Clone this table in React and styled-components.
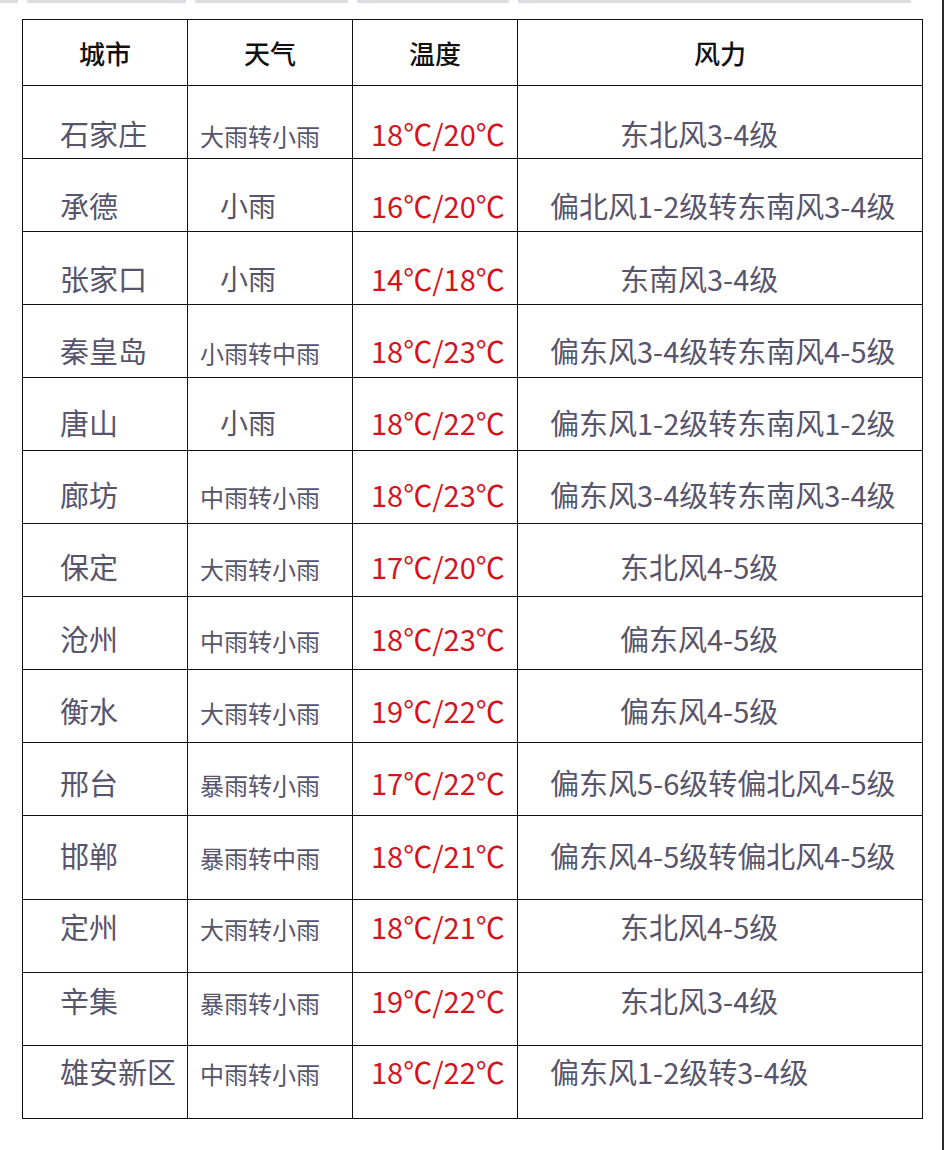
import React from "react";
import styled, { createGlobalStyle } from "styled-components";

const GlobalStyle = createGlobalStyle`
  html, body {
    margin: 0;
    padding: 0;
    background: #fff;
  }
  body {
    font-family: "Noto Sans CJK SC", "Noto Sans", sans-serif;
  }
`;

const rows = [
  { city: "石家庄", weather: "大雨转小雨", temp: "18℃/20℃", wind: "东北风3-4级", indent: true, pad: 33 },
  { city: "承德", weather: "小雨", temp: "16℃/20℃", wind: "偏北风1-2级转东南风3-4级", pad: 32 },
  { city: "张家口", weather: "小雨", temp: "14℃/18℃", wind: "东南风3-4级", indent: true, pad: 32 },
  { city: "秦皇岛", weather: "小雨转中雨", temp: "18℃/23℃", wind: "偏东风3-4级转东南风4-5级", pad: 31 },
  { city: "唐山", weather: "小雨", temp: "18℃/22℃", wind: "偏东风1-2级转东南风1-2级", pad: 30 },
  { city: "廊坊", weather: "中雨转小雨", temp: "18℃/23℃", wind: "偏东风3-4级转东南风3-4级", pad: 29 },
  { city: "保定", weather: "大雨转小雨", temp: "17℃/20℃", wind: "东北风4-5级", indent: true, pad: 28 },
  { city: "沧州", weather: "中雨转小雨", temp: "18℃/23℃", wind: "偏东风4-5级", indent: true, pad: 27 },
  { city: "衡水", weather: "大雨转小雨", temp: "19℃/22℃", wind: "偏东风4-5级", indent: true, pad: 26 },
  { city: "邢台", weather: "暴雨转小雨", temp: "17℃/22℃", wind: "偏东风5-6级转偏北风4-5级", pad: 25 },
  { city: "邯郸", weather: "暴雨转中雨", temp: "18℃/21℃", wind: "偏东风4-5级转偏北风4-5级", pad: 25, tall: true },
  { city: "定州", weather: "大雨转小雨", temp: "18℃/21℃", wind: "东北风4-5级", indent: true, pad: 12 },
  { city: "辛集", weather: "暴雨转小雨", temp: "19℃/22℃", wind: "东北风3-4级", indent: true, pad: 13 },
  { city: "雄安新区", weather: "中雨转小雨", temp: "18℃/22℃", wind: "偏东风1-2级转3-4级", pad: 11 },
];

const strips = [18, 159, 153, 152, 393];

function App() {
  return (
    <Page>
      <GlobalStyle />
      <TopStrip>
        {strips.map((w, i) => (
          <StripPiece key={i} $w={w} />
        ))}
      </TopStrip>
      <Table>
        <HeaderRow>
          <HeadCell>城市</HeadCell>
          <HeadCell>天气</HeadCell>
          <HeadCell>温度</HeadCell>
          <HeadCell>风力</HeadCell>
        </HeaderRow>
        {rows.map((r) => (
          <Row key={r.city} $tall={r.tall}>
            <CityCell $pad={r.pad}>{r.city}</CityCell>
            <WeatherCell $pad={r.pad} $short={r.weather.length < 3}>
              {r.weather}
            </WeatherCell>
            <TempCell $pad={r.pad}>{r.temp}</TempCell>
            <WindCell $pad={r.pad} $indent={r.indent}>
              {r.wind}
            </WindCell>
          </Row>
        ))}
      </Table>
    </Page>
  );
}

const Page = styled.div`
  width: 942px;
  min-height: 1150px;
  border-right: 2px solid #2a2a2a;
  background: #fff;
`;

const TopStrip = styled.div`
  display: flex;
  height: 3px;
  & > div + div {
    margin-left: 9px;
  }
`;

const StripPiece = styled.div`
  width: ${(p) => p.$w}px;
  height: 3px;
  background: #dcdce2;
`;

const Table = styled.div`
  margin: 16px 0 0 22px;
  width: 900px;
  border-left: 1px solid #111;
  border-top: 1px solid #111;
`;

const HeaderRow = styled.div`
  display: grid;
  grid-template-columns: 165px 165px 165px 405px;
  height: 66px;
`;

const Row = styled.div`
  display: grid;
  grid-template-columns: 165px 165px 165px 405px;
  height: ${(p) => (p.$tall ? 84 : 73)}px;
`;

const Cell = styled.div`
  box-sizing: border-box;
  border-right: 1px solid #111;
  border-bottom: 1px solid #111;
  white-space: nowrap;
  overflow: hidden;
`;

const HeadCell = styled(Cell)`
  display: flex;
  align-items: center;
  justify-content: center;
  font-size: 26px;
  font-weight: 500;
  color: #111;
`;

const BodyCell = styled(Cell)`
  padding-top: ${(p) => p.$pad}px;
  font-size: 29px;
  line-height: 29px;
  color: #57546c;
`;

const CityCell = styled(BodyCell)`
  padding-left: 37px;
`;

const WeatherCell = styled(BodyCell)`
  padding-left: ${(p) => (p.$short ? 32 : 12)}px;
  padding-top: ${(p) => p.$pad + (p.$short ? 0 : 2)}px;
  font-size: ${(p) => (p.$short ? 28 : 24)}px;
`;

const TempCell = styled(BodyCell)`
  padding-left: 18px;
  color: #d4141c;
`;

const WindCell = styled(BodyCell)`
  padding-left: ${(p) => (p.$indent ? 102 : 32)}px;
`;

export default App;
